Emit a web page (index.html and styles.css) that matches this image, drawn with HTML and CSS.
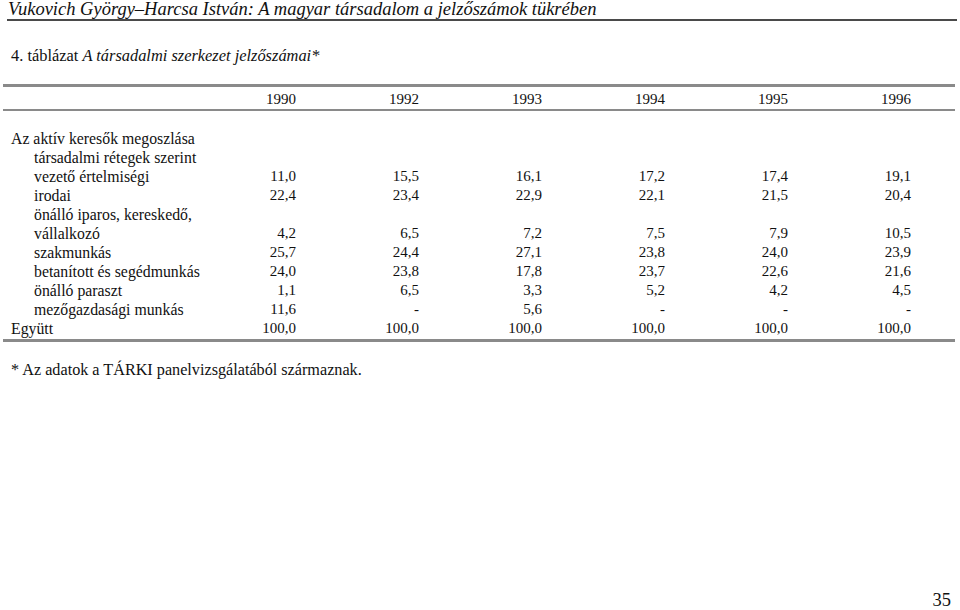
FILE: index.html
```html
<!DOCTYPE html>
<html>
<head>
<meta charset="utf-8">
<link rel="stylesheet" href="styles.css">
</head>
<body>
<div class="page">
  <header class="running-head">Vukovich György–Harcsa István: A magyar társadalom a jelzőszámok tükrében</header>
  <p class="caption">4. táblázat <i>A társadalmi szerkezet jelzőszámai*</i></p>
  <div class="tbl">
    <div class="row head">
      <span></span><span>1990</span><span>1992</span><span>1993</span><span>1994</span><span>1995</span><span>1996</span>
    </div>
    <div class="body">
      <div class="row"><span class="l1">Az aktív keresők megoszlása</span></div>
      <div class="row"><span class="l2">társadalmi rétegek szerint</span></div>
      <div class="row"><span class="l2">vezető értelmiségi</span><span>11,0</span><span>15,5</span><span>16,1</span><span>17,2</span><span>17,4</span><span>19,1</span></div>
      <div class="row"><span class="l2">irodai</span><span>22,4</span><span>23,4</span><span>22,9</span><span>22,1</span><span>21,5</span><span>20,4</span></div>
      <div class="row"><span class="l2">önálló iparos, kereskedő,</span></div>
      <div class="row"><span class="l2">vállalkozó</span><span>4,2</span><span>6,5</span><span>7,2</span><span>7,5</span><span>7,9</span><span>10,5</span></div>
      <div class="row"><span class="l2">szakmunkás</span><span>25,7</span><span>24,4</span><span>27,1</span><span>23,8</span><span>24,0</span><span>23,9</span></div>
      <div class="row"><span class="l2">betanított és segédmunkás</span><span>24,0</span><span>23,8</span><span>17,8</span><span>23,7</span><span>22,6</span><span>21,6</span></div>
      <div class="row"><span class="l2">önálló paraszt</span><span>1,1</span><span>6,5</span><span>3,3</span><span>5,2</span><span>4,2</span><span>4,5</span></div>
      <div class="row"><span class="l2">mezőgazdasági munkás</span><span>11,6</span><span>-</span><span>5,6</span><span>-</span><span>-</span><span>-</span></div>
      <div class="row"><span class="l1">Együtt</span><span>100,0</span><span>100,0</span><span>100,0</span><span>100,0</span><span>100,0</span><span>100,0</span></div>
    </div>
  </div>
  <p class="note">* Az adatok a TÁRKI panelvizsgálatából származnak.</p>
  <footer class="folio">35</footer>
</div>
</body>
</html>
```
FILE: styles.css
```css
html, body {
  margin: 0;
  padding: 0;
  background: #fff;
}
.page {
  position: relative;
  width: 960px;
  height: 610px;
  overflow: hidden;
  font-family: "Liberation Serif", "Times New Roman", serif;
  color: #111;
}
.running-head {
  margin: 0 3px 0 7px;
  padding-left: 1px;
  font-family: "Liberation Serif", "Times New Roman", serif;
  font-style: italic;
  font-size: 18.5px;
  line-height: 19px;
  height: 19px;
  border-bottom: 2px solid #4a4a4a;
  white-space: nowrap;
}
.caption {
  margin: 25px 0 0 11px;
  font-family: "Liberation Serif", "Times New Roman", serif;
  font-size: 16.4px;
  line-height: 20px;
}
.caption i {
  font-style: italic;
}
.tbl {
  margin: 18px 0 0 3px;
  width: 952px;
  border-top: 3px solid #8a8a8a;
  border-bottom: 3px solid #8a8a8a;
  font-family: "Liberation Serif", "Times New Roman", serif;
  font-size: 15px;
}
.row {
  display: grid;
  grid-template-columns: 170px repeat(6, 123px);
  line-height: 19px;
  height: 19px;
  white-space: nowrap;
}
.row > span {
  text-align: right;
}
.row > span.l1,
.row > span.l2 {
  text-align: left;
  font-size: 15.8px;
}
.l1 { padding-left: 8px; }
.l2 { padding-left: 31px; }
.row.head {
  padding: 3px 0 0;
  border-bottom: 2px solid #8a8a8a;
}
.body {
  padding: 18px 0 1px;
}
.note {
  margin: 19px 0 0 11px;
  font-family: "Liberation Serif", "Times New Roman", serif;
  font-size: 16.2px;
  line-height: 19px;
}
.folio {
  position: absolute;
  right: 9px;
  top: 590px;
  font-family: "Liberation Serif", "Times New Roman", serif;
  font-size: 18.5px;
  line-height: 20px;
}
```
